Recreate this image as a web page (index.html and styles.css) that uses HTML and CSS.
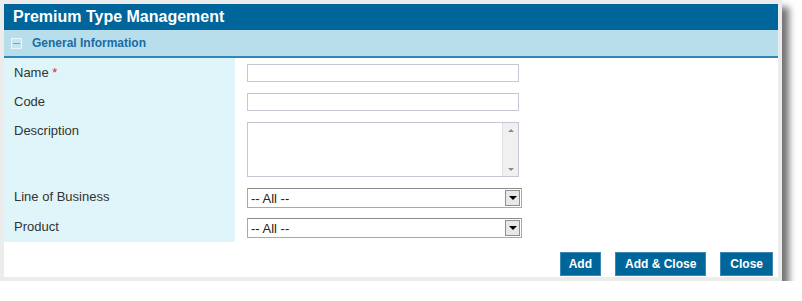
FILE: index.html
```html
<!DOCTYPE html>
<html>
<head>
  <meta http-equiv="content-type" content="text/html; charset=utf-8" />
  <title>Premium Type Management</title>
<link rel="stylesheet" href="styles.css">
</head>
<body>

<div id="window">
  <div id="title">Premium Type Management</div>

  <div id="section">
    <span class="toggle"><span></span></span>
    General Information
  </div>

  <div id="form">
    <div class="label">Name <span class="req">*</span></div>
    <div class="field"><input type="text" class="text" /></div>

    <div class="label">Code</div>
    <div class="field"><input type="text" class="text" /></div>

    <div class="label">Description</div>
    <div class="field">
      <div class="textarea">
        <div class="area"></div>
        <div class="scroll"><span class="up"></span><span class="down"></span></div>
      </div>
    </div>

    <div class="label">Line of Business</div>
    <div class="field">
      <div class="select"><span>-- All --</span><span class="arrow"><i></i></span></div>
    </div>

    <div class="label">Product</div>
    <div class="field">
      <div class="select"><span>-- All --</span><span class="arrow"><i></i></span></div>
    </div>
  </div>

  <div id="buttons">
    <button>Add</button>
    <button>Add &amp; Close</button>
    <button>Close</button>
  </div>
</div>

</body>
</html>
```

FILE: styles.css
```css
body {
    margin: 0;
    background: #fff;
    font-family: "Liberation Sans", Arial, sans-serif;
}
#window {
    width: 774px;
    border: 4px solid #ececec;
    background: #fff;
    box-shadow: 7px 7px 7px rgba(0, 0, 0, 0.55);
}
#title {
    height: 26px;
    line-height: 26px;
    padding-left: 9px;
    background: #00659a;
    color: #fff;
    font-weight: bold;
    font-size: 16px;
}
#section {
    display: flex;
    align-items: center;
    height: 26px;
    padding-left: 7px;
    background: #b9deeb;
    border-bottom: 2px solid #2f86bb;
    color: #1a6ca3;
    font-weight: bold;
    font-size: 12px;
}
.toggle {
    display: flex;
    align-items: center;
    justify-content: center;
    width: 9px;
    height: 9px;
    margin-right: 10px;
    border: 1px solid #eaf5fa;
    background: #c4e4f0;
}
.toggle span {
    width: 7px;
    height: 1px;
    background: #7a9fb5;
}
#form {
    display: grid;
    grid-template-columns: 231px 1fr;
    grid-template-rows: 29px 29px 66px 30px 30px;
    font-size: 13px;
    color: #333;
}
.label {
    background: #dff5fa;
    padding: 7px 0 0 10px;
}
.req {
    color: #e0262b;
}
.field {
    padding: 6px 0 0 12px;
}
.text {
    display: block;
    width: 272px;
    height: 18px;
    margin: 0;
    box-sizing: border-box;
    border: 1px solid #c6c6d6;
    padding: 0;
}
.textarea {
    display: flex;
    width: 272px;
    height: 55px;
    box-sizing: border-box;
    border: 1px solid #c6c6d6;
}
.area {
    flex: 1;
}
.scroll {
    width: 15px;
    background: #f0f0f0;
    border-left: 1px solid #e2e2e2;
    display: flex;
    flex-direction: column;
    justify-content: space-between;
    align-items: center;
    padding: 6px 0 5px;
}
.up, .down {
    width: 0;
    height: 0;
    border-left: 3px solid transparent;
    border-right: 3px solid transparent;
}
.up {
    border-bottom: 3px solid #8a8a8a;
}
.down {
    border-top: 3px solid #8a8a8a;
}
.select {
    display: flex;
    align-items: center;
    justify-content: space-between;
    width: 275px;
    height: 20px;
    box-sizing: border-box;
    border: 1px solid #a9a9a9;
    border-top-color: #8c8c8c;
    font-size: 13px;
    color: #222;
    padding-left: 3px;
}
.arrow {
    display: flex;
    align-items: center;
    justify-content: center;
    width: 15px;
    height: 16px;
    margin-right: 1px;
    background: #e8e8e8;
    border: 1px solid #8e8e8e;
    box-sizing: border-box;
}
.arrow i {
    width: 0;
    height: 0;
    border-left: 4px solid transparent;
    border-right: 4px solid transparent;
    border-top: 4px solid #000;
}
#buttons {
    display: flex;
    justify-content: flex-end;
    gap: 14px;
    padding: 10px 5px 1px 0;
}
#buttons button {
    height: 24px;
    padding: 0 9px;
    margin: 0;
    background: #00669a;
    color: #fff;
    border: 1px solid #3d87b3;
    font-family: "Liberation Sans", Arial, sans-serif;
    font-weight: bold;
    font-size: 12px;
}
#buttons button:first-child {
    padding: 0 8px;
}
```
